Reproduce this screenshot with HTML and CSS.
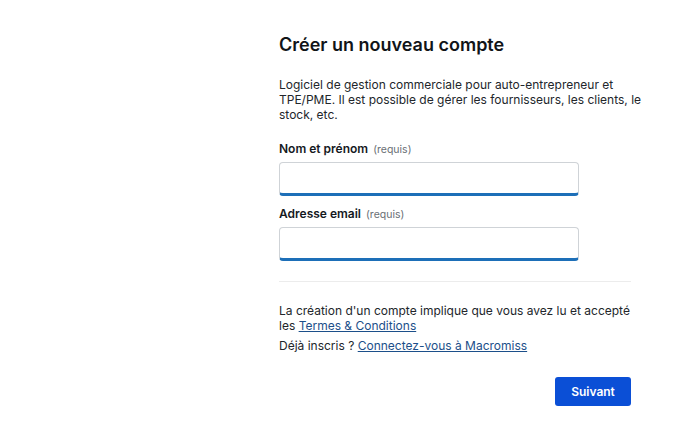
FILE: index.html
```html
<!DOCTYPE html>
<html lang="fr">
<head>
<meta charset="utf-8">
<link rel="stylesheet" href="styles.css">
<title>Créer un nouveau compte</title>
</head>
<body>
<main class="page">
  <section class="panel">
    <h1 class="title">Créer un nouveau compte</h1>
    <p class="intro">Logiciel de gestion commerciale pour auto-entrepreneur et TPE/PME. Il est possible de gérer les fournisseurs, les clients, le stock, etc.</p>
    <form class="form">
      <div class="field">
        <label class="label" for="name">Nom et prénom <span class="req">(requis)</span></label>
        <input class="input" id="name" type="text">
      </div>
      <div class="field">
        <label class="label" for="email">Adresse email <span class="req">(requis)</span></label>
        <input class="input" id="email" type="email">
      </div>
      <hr class="sep">
      <p class="note">La création d'un compte implique que vous avez lu et accepté les <a class="link" href="#">Termes &amp; Conditions</a></p>
      <p class="note">Déjà inscris ? <a class="link" href="#">Connectez-vous à Macromiss</a></p>
      <div class="actions">
        <button class="btn" type="button">Suivant</button>
      </div>
    </form>
  </section>
</main>
</body>
</html>
```
FILE: styles.css
```css
* { box-sizing: border-box; }
html, body { margin: 0; padding: 0; background: #fff; }
body {
  font-family: Inter, "Noto Sans", sans-serif;
  color: #1b1f24;
  font-size: 12px;
  line-height: 15px;
}
.page { display: flex; padding: 34px 0 0 279px; }
.panel { width: 352px; }
.title {
  margin: 0;
  font-size: 18px;
  line-height: 22px;
  font-weight: 600;
  color: #111418;
}
.intro { margin: 21px 0 0; width: 366px; color: #22262b; }
.form { margin: 0; }
.field { margin-top: 19px; display: flex; flex-direction: column; }
.field + .field { margin-top: 10px; }
.label { font-weight: 600; color: #15191e; line-height: 16px; margin-bottom: 4px; }
.req { font-weight: 400; font-size: 10.5px; color: #6a6f75; margin-left: 2px; }
.input {
  width: 300px;
  height: 34px;
  border: 1px solid #cfd3d7;
  border-bottom: 3px solid #1d6fb8;
  border-radius: 4px;
  background: #fff;
  font: inherit;
  padding: 0 8px;
  outline: none;
}
.sep { border: 0; border-top: 1px solid #ececec; margin: 20px 0 21px; }
.note { margin: 0 0 5px; color: #22262b; }
.link { color: #1c4f8a; text-decoration: underline; }
.actions { display: flex; justify-content: flex-end; margin-top: 24px; }
.btn {
  width: 76px;
  height: 29px;
  border: 0;
  border-radius: 3px;
  background: #0b4fd6;
  color: #fff;
  font: inherit;
  font-weight: 600;
  cursor: pointer;
}
```
